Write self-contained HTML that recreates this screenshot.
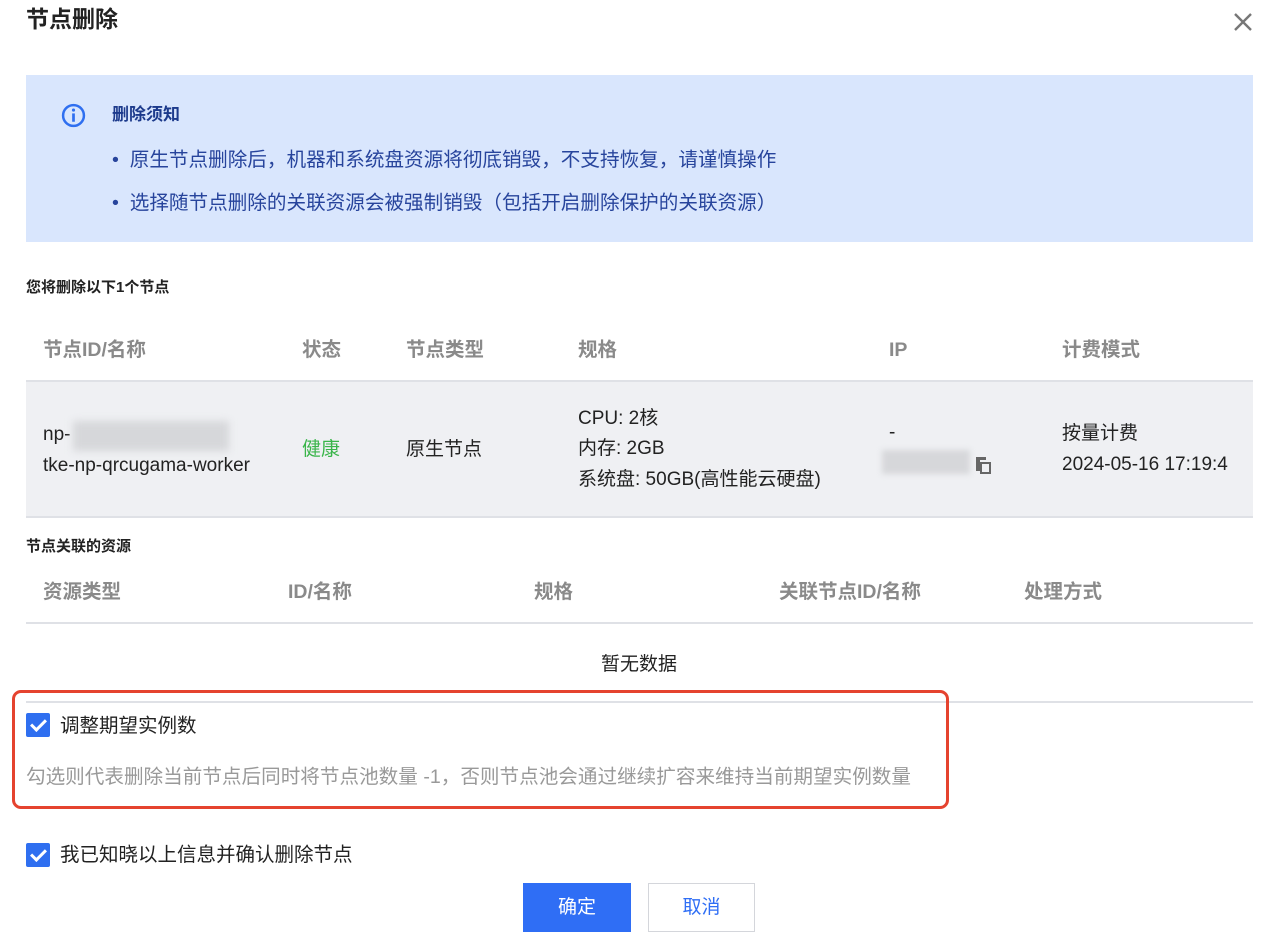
<!DOCTYPE html>
<html><head><meta charset="utf-8"><style>
*{margin:0;padding:0;box-sizing:border-box}
body{width:1266px;height:940px;background:#fff;position:relative;overflow:hidden;font-family:"Liberation Sans","Noto Sans CJK SC",sans-serif;color:#222}
.a{position:absolute;white-space:nowrap}
.th{color:#8a8a8a;font-size:19.5px;line-height:22px;font-weight:bold}
.td{font-size:19px;line-height:22px;color:#222}
.cb{position:absolute;width:24px;height:24px;background:#2f6ff0;border-radius:2px}
.cb:after{content:"";position:absolute;left:8px;top:3px;width:6px;height:12px;border:solid #fff;border-width:0 3px 3px 0;transform:rotate(45deg)}
</style></head><body>
<div class="a" style="left:26px;top:5px;font-size:23px;font-weight:bold;line-height:28px">节点删除</div>
<svg class="a" style="left:1233px;top:12px" width="20" height="20" viewBox="0 0 20 20"><path d="M2 2L18 18M18 2L2 18" stroke="#777" stroke-width="2.4"/></svg>

<div class="a" style="left:26px;top:75px;width:1227px;height:167px;background:#d9e6fd"></div>
<svg class="a" style="left:61px;top:103px" width="25" height="25" viewBox="0 0 24 24"><circle cx="12" cy="12" r="10" fill="none" stroke="#2f6ff0" stroke-width="2.4"/><rect x="10.7" y="10" width="2.6" height="8" fill="#2f6ff0"/><circle cx="12" cy="6.8" r="1.5" fill="#2f6ff0"/></svg>
<div class="a" style="left:112px;top:103px;font-size:17px;font-weight:bold;color:#1c3a8c;line-height:24px">删除须知</div>
<div class="a" style="left:112px;top:148px;font-size:19.6px;color:#27449c;line-height:24px">•&nbsp; 原生节点删除后，机器和系统盘资源将彻底销毁，不支持恢复，请谨慎操作</div>
<div class="a" style="left:112px;top:191px;font-size:19.6px;color:#27449c;line-height:24px">•&nbsp; 选择随节点删除的关联资源会被强制销毁（包括开启删除保护的关联资源）</div>

<div class="a" style="left:26px;top:278px;font-size:15px;font-weight:bold;line-height:20px">您将删除以下1个节点</div>
<div class="a th" style="left:43px;top:339px">节点ID/名称</div>
<div class="a th" style="left:302px;top:339px">状态</div>
<div class="a th" style="left:406px;top:339px">节点类型</div>
<div class="a th" style="left:578px;top:339px">规格</div>
<div class="a th" style="left:889px;top:339px">IP</div>
<div class="a th" style="left:1062px;top:339px">计费模式</div>
<div class="a" style="left:26px;top:380px;width:1227px;height:138px;background:#eff0f3;border-top:2px solid #dfe1e6;border-bottom:2px solid #dfe1e6"></div>
<div class="a td" style="left:43px;top:424px">np-</div>
<div class="a" style="left:73px;top:421px;width:156px;height:30px;background:#d6d7da;filter:blur(4px)"></div>
<div class="a td" style="left:43px;top:455px">tke-np-qrcugama-worker</div>
<div class="a td" style="left:302px;top:439px;color:#3ab54a">健康</div>
<div class="a td" style="left:406px;top:439px">原生节点</div>
<div class="a td" style="left:578px;top:408px">CPU: 2核</div>
<div class="a td" style="left:578px;top:438px">内存: 2GB</div>
<div class="a td" style="left:578px;top:469px">系统盘: 50GB(高性能云硬盘)</div>
<div class="a td" style="left:889px;top:422px">-</div>
<div class="a" style="left:882px;top:450px;width:88px;height:24px;background:#d6d7da;filter:blur(3px)"></div>
<svg class="a" style="left:975px;top:456px" width="16" height="18" viewBox="0 0 16 18"><rect x="1" y="1" width="4" height="14" fill="#666"/><rect x="1" y="1" width="10" height="3" fill="#666"/><rect x="6" y="7" width="9" height="10" fill="none" stroke="#666" stroke-width="2"/></svg>
<div class="a td" style="left:1062px;top:423px">按量计费</div>
<div class="a td" style="left:1062px;top:454px;width:176px;overflow:hidden">2024-05-16 17:19:4</div>

<div class="a" style="left:26px;top:537px;font-size:15px;font-weight:bold;line-height:20px">节点关联的资源</div>
<div class="a th" style="left:43px;top:581px">资源类型</div>
<div class="a th" style="left:288px;top:581px">ID/名称</div>
<div class="a th" style="left:534px;top:581px">规格</div>
<div class="a th" style="left:779px;top:581px">关联节点ID/名称</div>
<div class="a th" style="left:1024px;top:581px">处理方式</div>
<div class="a" style="left:26px;top:622px;width:1227px;height:2px;background:#dfe1e6"></div>
<div class="a td" style="left:601px;top:654px">暂无数据</div>
<div class="a" style="left:26px;top:701px;width:1227px;height:2px;background:#dfe1e6"></div>

<div class="a" style="left:12px;top:690px;width:937px;height:119px;border:3px solid #e5432f;border-radius:9px"></div>
<div class="cb" style="left:26px;top:713px"></div>
<div class="a" style="left:60px;top:714px;font-size:19.5px;line-height:24px">调整期望实例数</div>
<div class="a" style="left:26px;top:765px;font-size:19.6px;line-height:24px;color:#999">勾选则代表删除当前节点后同时将节点池数量 -1，否则节点池会通过继续扩容来维持当前期望实例数量</div>

<div class="cb" style="left:26px;top:843px"></div>
<div class="a" style="left:60px;top:843px;font-size:19.5px;line-height:24px">我已知晓以上信息并确认删除节点</div>
<div class="a" style="left:523px;top:883px;width:108px;height:49px;background:#2f6ef5;color:#fff;font-size:19px;line-height:49px;text-align:center">确定</div>
<div class="a" style="left:648px;top:883px;width:107px;height:49px;background:#fff;border:1px solid #d4d6db;color:#2f6ef5;font-size:19px;line-height:47px;text-align:center">取消</div>
</body></html>
